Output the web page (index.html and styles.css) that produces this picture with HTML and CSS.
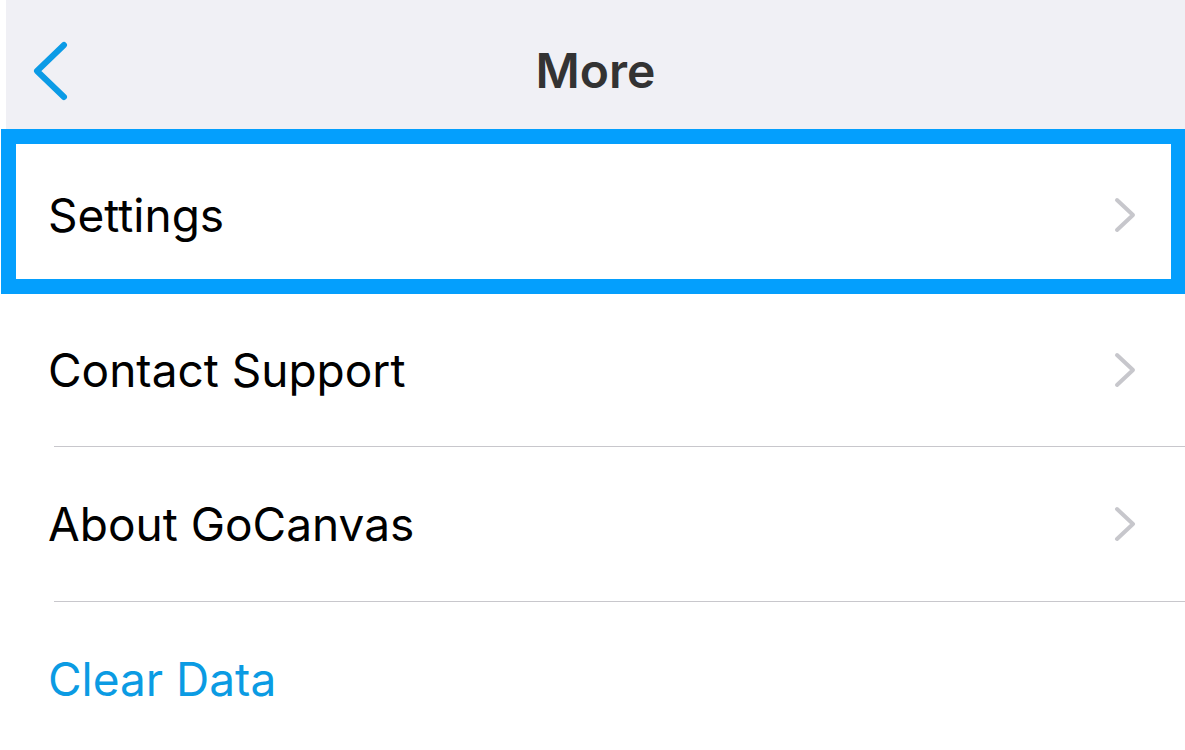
FILE: index.html
```html
<!DOCTYPE html>
<html lang="en">
<head>
<meta charset="utf-8">
<title>More</title>
<link rel="stylesheet" href="styles.css">
</head>
<body>
<div class="page">
  <header class="navbar">
    <div class="nav-left">
      <svg class="back" width="40" height="60" viewBox="0 0 40 60" aria-hidden="true">
        <polyline points="34,4 7,30 34,56" fill="none" stroke="#0b9be6" stroke-width="6" stroke-linecap="round" stroke-linejoin="round"/>
      </svg>
    </div>
    <h1 class="title">More</h1>
    <div class="nav-right"></div>
  </header>
  <ul class="menu">
    <li class="row row-selected">
      <span class="label">Settings</span>
      <svg class="chev" width="22" height="40" viewBox="0 0 22 40" aria-hidden="true"><polyline points="3,5 19,20 3,35" fill="none" stroke="#c7c7cc" stroke-width="4" stroke-linecap="round" stroke-linejoin="round"/></svg>
    </li>
    <li class="row">
      <span class="label">Contact Support</span>
      <svg class="chev" width="22" height="40" viewBox="0 0 22 40" aria-hidden="true"><polyline points="3,5 19,20 3,35" fill="none" stroke="#c7c7cc" stroke-width="4" stroke-linecap="round" stroke-linejoin="round"/></svg>
    </li>
    <li class="sep"></li>
    <li class="row row-tall">
      <span class="label">About GoCanvas</span>
      <svg class="chev" width="22" height="40" viewBox="0 0 22 40" aria-hidden="true"><polyline points="3,5 19,20 3,35" fill="none" stroke="#c7c7cc" stroke-width="4" stroke-linecap="round" stroke-linejoin="round"/></svg>
    </li>
    <li class="sep"></li>
    <li class="row row-tall">
      <span class="label label-action">Clear Data</span>
    </li>
  </ul>
</div>
</body>
</html>
```

FILE: styles.css
```css
html, body {
  margin: 0;
  padding: 0;
  background: #ffffff;
}
body {
  font-family: Inter, "Noto Sans", "Liberation Sans", sans-serif;
  width: 1185px;
  height: 750px;
  overflow: hidden;
}
.page {
  display: flex;
  flex-direction: column;
}
.navbar {
  margin-left: 6px;
  height: 129px;
  box-sizing: border-box;
  padding-top: 13px;
  background: #f0f0f5;
  display: grid;
  grid-template-columns: 1fr auto 1fr;
  align-items: center;
}
.nav-left {
  display: flex;
  align-items: center;
  padding-left: 24px;
}
.back {
  display: block;
}
.title {
  margin: 0;
  font-size: 48px;
  font-weight: 600;
  color: #333333;
  line-height: 1;
}
.menu {
  list-style: none;
  margin: 0;
  padding: 0;
  display: flex;
  flex-direction: column;
}
.row {
  height: 152px;
  display: flex;
  align-items: center;
  justify-content: space-between;
  padding: 0 49px 0 48px;
  box-sizing: border-box;
}
.row-tall {
  height: 154px;
}
.row-selected {
  margin-left: 1px;
  height: 165px;
  border: 15px solid #049ffd;
  border-right-width: 14px;
  padding: 6px 35px 0 32px;
}
.label {
  font-size: 46px;
  color: #000000;
  line-height: 1;
}
.label-action {
  color: #0b9be3;
}
.chev {
  display: block;
  flex: none;
}
.sep {
  height: 1px;
  margin-left: 54px;
  background: #c8c7cc;
}
```
